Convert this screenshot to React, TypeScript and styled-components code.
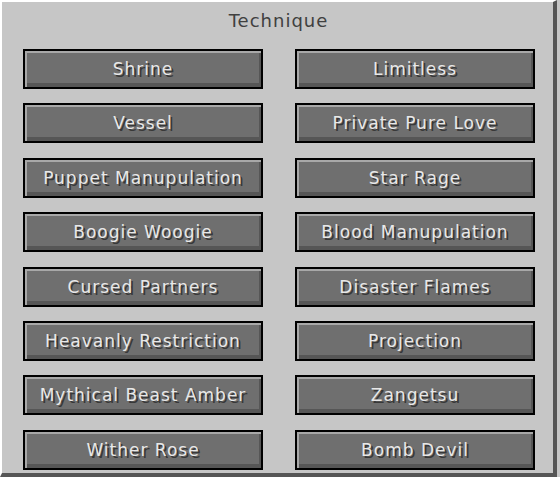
import React from 'react';
import styled, { createGlobalStyle } from 'styled-components';

const GlobalStyle = createGlobalStyle`
	html, body {
		margin: 0;
		padding: 0;
		background: #c6c6c6;
	}
`;

const Panel = styled.div`
	box-sizing: border-box;
	width: 557px;
	height: 477px;
	background: #c6c6c6;
	border-top: 2px solid #ffffff;
	border-left: 2px solid #ffffff;
	border-right: 4px solid #555555;
	border-bottom: 4px solid #555555;
	padding: 8px 0 0 21px;
	display: flex;
	flex-direction: column;
`;

const Title = styled.h1`
	margin: 0;
	height: 39px;
	width: 511px;
	text-align: center;
	font-family: 'DejaVu Sans', sans-serif;
	font-weight: normal;
	font-size: 18px;
	letter-spacing: 1px;
	color: #404040;
`;

const Grid = styled.div`
	display: grid;
	grid-template-columns: 240px 240px;
	grid-auto-rows: 40px;
	column-gap: 32px;
	row-gap: 14.4px;
`;

const Button = styled.button`
	box-sizing: border-box;
	height: 40px;
	margin: 0;
	padding: 0;
	background: #6f6f6f;
	border: 2px solid #000000;
	box-shadow: inset 2px 2px 0 #a8a8a8, inset -2px -4px 0 #565656;
	font-family: 'DejaVu Sans', sans-serif;
	font-size: 17px;
	letter-spacing: 1px;
	color: #e8e8e8;
	text-shadow: 2px 2px 0 #383838;
	cursor: pointer;
`;

type Props = {
	title: string
}

const techniques = [
	'Shrine', 'Limitless',
	'Vessel', 'Private Pure Love',
	'Puppet Manupulation', 'Star Rage',
	'Boogie Woogie', 'Blood Manupulation',
	'Cursed Partners', 'Disaster Flames',
	'Heavanly Restriction', 'Projection',
	'Mythical Beast Amber', 'Zangetsu',
	'Wither Rose', 'Bomb Devil'
];

const App = ({ title = 'Technique' }: Partial<Props>) => {
	return (
		<>
			<GlobalStyle />
			<Panel>
				<Title>{title}</Title>
				<Grid>
					{techniques.map((name) => (
						<Button key={name}>{name}</Button>
					))}
				</Grid>
			</Panel>
		</>
	);
};

export default App;
